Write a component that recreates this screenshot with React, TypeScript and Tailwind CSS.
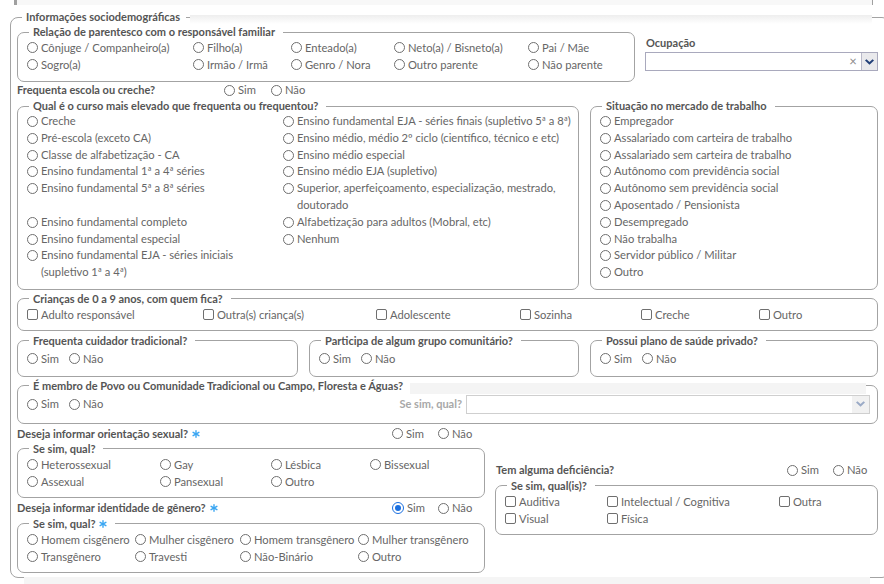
import React from "react";

const Radio = ({ checked = false }: { checked?: boolean }) =>
  checked ? (
    <span className="inline-flex w-[12px] h-[12px] shrink-0 rounded-full border border-[#1a6fe0] bg-white p-[2px]">
      <span className="block w-full h-full rounded-full bg-[#1a6fe0]" />
    </span>
  ) : (
    <span className="inline-block w-[11px] h-[11px] shrink-0 rounded-full border border-[#6f6f6f] bg-white" />
  );

const Check = () => (
  <span className="inline-block w-[11px] h-[11px] shrink-0 rounded-[2px] border border-[#6f6f6f] bg-white" />
);

type OptProps = { label: React.ReactNode; checked?: boolean; box?: boolean; className?: string };

const Opt = ({ label, checked, box, className = "" }: OptProps) => (
  <div className={`flex items-center gap-[3px] whitespace-nowrap ${className}`}>
    {box ? <Check /> : <Radio checked={checked} />}
    <span>{label}</span>
  </div>
);

const OptTop = ({ label }: { label: React.ReactNode }) => (
  <div className="flex items-start gap-[3px] whitespace-nowrap">
    <span className="mt-[3px] inline-block w-[11px] h-[11px] shrink-0 rounded-full border border-[#6f6f6f] bg-white" />
    <span>{label}</span>
  </div>
);

const Star = () => (
  <svg width="8" height="8" viewBox="0 0 8 8" className="shrink-0">
    <g stroke="#3aa6f2" strokeWidth="1.4" strokeLinecap="round">
      <line x1="4" y1="0.7" x2="4" y2="7.3" />
      <line x1="1.1" y1="2.3" x2="6.9" y2="5.7" />
      <line x1="1.1" y1="5.7" x2="6.9" y2="2.3" />
    </g>
  </svg>
);

type FSProps = { legend: React.ReactNode; className?: string; inner?: string; children: React.ReactNode };

const FS = ({ legend, className = "", inner = "", children }: FSProps) => (
  <fieldset className={`min-w-0 border border-[#a3a3a3] rounded-[7px] ${className}`}>
    <legend className="ml-[11px] pl-[4px] pr-[8px] font-bold text-[11px] text-[#555] leading-[14px]">
      <span className="inline-flex items-center gap-[4px]">{legend}</span>
    </legend>
    <div className={`pl-[9px] ${inner}`}>{children}</div>
  </fieldset>
);

const Chevron = ({ color }: { color: string }) => (
  <svg width="9" height="6" viewBox="0 0 10 6">
    <polygon points="0,1.4 1.6,0 5,3 8.4,0 10,1.4 5,6" fill={color} />
  </svg>
);

const B = "font-bold text-[11px] text-[#555]";

export default function App() {
  return (
    <div className="relative w-[884px] h-[584px] overflow-hidden bg-white text-[11.2px] text-[#666] [font-family:Lato,sans-serif]">
      <div className="h-[5px] ml-[14px] w-[859px] bg-[#f8f8f8] border-l-[3px] border-r border-[#a0a0a0]" />
      <fieldset className="mt-[5px] ml-[10px] w-[880px] border border-[#a3a3a3] rounded-[8px] pb-[4px]">
        <legend className="ml-[11px] pl-[4px] pr-[6px] font-bold text-[11px] text-[#555] leading-[14px]">
          Informações sociodemográficas
        </legend>
        <div className="pl-[6px] pr-[11px]">
          {/* Top row */}
          <div className="flex gap-[10px]">
            <FS legend="Relação de parentesco com o responsável familiar" className="mt-[1px] w-[618px] pb-[8px]">
              <div className="grid grid-cols-[166px_98px_103px_134px_1fr] leading-[17px]">
                <Opt label="Cônjuge / Companheiro(a)" />
                <Opt label="Filho(a)" />
                <Opt label="Enteado(a)" />
                <Opt label="Neto(a) / Bisneto(a)" />
                <Opt label="Pai / Mãe" />
                <Opt label="Sogro(a)" />
                <Opt label="Irmão / Irmã" />
                <Opt label="Genro / Nora" />
                <Opt label="Outro parente" />
                <Opt label="Não parente" />
              </div>
            </FS>
            <div className="flex-1">
              <div className={`mt-[11px] ${B} leading-[16px] pl-[1px]`}>Ocupação</div>
              <div className="mt-[1px] h-[19px] flex border border-[#a9a9bd] bg-white">
                <div className="flex-1" />
                <div className="w-[16px] flex items-center justify-center text-[#8a8a8a] text-[13px] leading-none">×</div>
                <div className="w-[16px] border-l border-[#b9b9c9] bg-[#e9e9ec] flex items-center justify-center">
                  <Chevron color="#213f78" />
                </div>
              </div>
            </div>
          </div>

          {/* Frequenta escola */}
          <div className="flex h-[17px] items-center">
            <div className={`w-[207px] ${B}`}>Frequenta escola ou creche?</div>
            <Opt label="Sim" className="w-[47px]" />
            <Opt label="Não" />
          </div>

          {/* Curso + Situação */}
          <div className="flex gap-[11px]">
            <FS legend="Qual é o curso mais elevado que frequenta ou frequentou?" className="w-[562px] pb-[8px]">
              <div className="grid grid-cols-[256px_1fr] leading-[16.8px]">
                <OptTop label="Creche" />
                <OptTop label="Ensino fundamental EJA - séries finais (supletivo 5ª a 8ª)" />
                <OptTop label="Pré-escola (exceto CA)" />
                <OptTop label="Ensino médio, médio 2º ciclo (científico, técnico e etc)" />
                <OptTop label="Classe de alfabetização - CA" />
                <OptTop label="Ensino médio especial" />
                <OptTop label="Ensino fundamental 1ª a 4ª séries" />
                <OptTop label="Ensino médio EJA (supletivo)" />
                <OptTop label="Ensino fundamental 5ª a 8ª séries" />
                <OptTop
                  label={
                    <>
                      Superior, aperfeiçoamento, especialização, mestrado,
                      <br />
                      doutorado
                    </>
                  }
                />
                <OptTop label="Ensino fundamental completo" />
                <OptTop label="Alfabetização para adultos (Mobral, etc)" />
                <OptTop label="Ensino fundamental especial" />
                <OptTop label="Nenhum" />
                <OptTop
                  label={
                    <>
                      Ensino fundamental EJA - séries iniciais
                      <br />
                      (supletivo 1ª a 4ª)
                    </>
                  }
                />
                <div />
              </div>
            </FS>
            <FS legend="Situação no mercado de trabalho" className="flex-1 pb-[8px]">
              <div className="flex flex-col leading-[16.8px]">
                <OptTop label="Empregador" />
                <OptTop label="Assalariado com carteira de trabalho" />
                <OptTop label="Assalariado sem carteira de trabalho" />
                <OptTop label="Autônomo com previdência social" />
                <OptTop label="Autônomo sem previdência social" />
                <OptTop label="Aposentado / Pensionista" />
                <OptTop label="Desempregado" />
                <OptTop label="Não trabalha" />
                <OptTop label="Servidor público / Militar" />
                <OptTop label="Outro" />
              </div>
            </FS>
          </div>

          {/* Crianças */}
          <FS legend="Crianças de 0 a 9 anos, com quem fica?" className="mt-[2px] pb-[6px]">
            <div className="flex h-[18px] items-center">
              <Opt box label="Adulto responsável" className="w-[176px]" />
              <Opt box label="Outra(s) criança(s)" className="w-[173px]" />
              <Opt box label="Adolescente" className="w-[144px]" />
              <Opt box label="Sozinha" className="w-[121px]" />
              <Opt box label="Creche" className="w-[118px]" />
              <Opt box label="Outro" />
            </div>
          </FS>

          {/* Three boxes */}
          <div className="mt-[3px] flex gap-[11px]">
            <FS legend="Frequenta cuidador tradicional?" className="w-[281px] pt-[2px] pb-[8px]">
              <div className="flex h-[18px] items-center">
                <Opt label="Sim" className="w-[42px]" />
                <Opt label="Não" />
              </div>
            </FS>
            <FS legend="Participa de algum grupo comunitário?" className="w-[270px] pt-[2px] pb-[8px]">
              <div className="flex h-[18px] items-center">
                <Opt label="Sim" className="w-[42px]" />
                <Opt label="Não" />
              </div>
            </FS>
            <FS legend="Possui plano de saúde privado?" className="flex-1 pt-[2px] pb-[8px]">
              <div className="flex h-[18px] items-center">
                <Opt label="Sim" className="w-[42px]" />
                <Opt label="Não" />
              </div>
            </FS>
          </div>

          {/* É membro */}
          <FS
            legend="É membro de Povo ou Comunidade Tradicional ou Campo, Floresta e Águas?"
            className="mt-[2px] pt-[2px] pb-[9px]"
            inner="pr-[7px]"
          >
            <div className="flex h-[19px] items-center">
              <Opt label="Sim" className="w-[42px]" />
              <Opt label="Não" />
              <div className="flex-1 flex items-center justify-end">
                <span className="font-bold text-[11px] text-[#a8a8a8] mr-[4px]">Se sim, qual?</span>
                <div className="w-[404px] h-[19px] flex border border-[#cfcfcf] bg-white">
                  <div className="flex-1" />
                  <div className="w-[17px] bg-[#f1f1f1] flex items-center justify-center">
                    <Chevron color="#9aaac6" />
                  </div>
                </div>
              </div>
            </div>
          </FS>

          {/* Bottom section */}
          <div className="flex items-center gap-[10px]">
            <div className="w-[468px]">
              <div className="mt-[2px] flex h-[16px] items-center">
                <div className={`w-[375px] ${B} flex items-center gap-[4px]`}>
                  Deseja informar orientação sexual? <Star />
                </div>
                <Opt label="Sim" className="w-[46px]" />
                <Opt label="Não" />
              </div>
              <FS legend="Se sim, qual?" className="pb-[7px]">
                <div className="grid grid-cols-[133px_111px_99px_1fr] leading-[17px]">
                  <Opt label="Heterossexual" />
                  <Opt label="Gay" />
                  <Opt label="Lésbica" />
                  <Opt label="Bissexual" />
                  <Opt label="Assexual" />
                  <Opt label="Pansexual" />
                  <Opt label="Outro" />
                </div>
              </FS>
              <div className="mt-[2px] flex h-[17px] items-center">
                <div className={`w-[375px] ${B} flex items-center gap-[4px]`}>
                  Deseja informar identidade de gênero? <Star />
                </div>
                <Opt label="Sim" checked className="w-[46px]" />
                <Opt label="Não" />
              </div>
              <FS
                legend={
                  <>
                    Se sim, qual? <Star />
                  </>
                }
                className="pb-[7px]"
              >
                <div className="grid grid-cols-[108px_105px_118px_1fr] leading-[17px]">
                  <Opt label="Homem cisgênero" />
                  <Opt label="Mulher cisgênero" />
                  <Opt label="Homem transgênero" />
                  <Opt label="Mulher transgênero" />
                  <Opt label="Transgênero" />
                  <Opt label="Travesti" />
                  <Opt label="Não-Binário" />
                  <Opt label="Outro" />
                </div>
              </FS>
            </div>
            <div className="flex-1">
              <div className="flex h-[17px] items-center">
                <div className={`w-[292px] ${B} pl-[1px]`}>Tem alguma deficiência?</div>
                <Opt label="Sim" className="w-[46px]" />
                <Opt label="Não" />
              </div>
              <FS legend="Se sim, qual(is)?" className="pb-[7px]">
                <div className="grid grid-cols-[102px_172px_1fr] leading-[17px]">
                  <Opt box label="Auditiva" />
                  <Opt box label="Intelectual / Cognitiva" />
                  <Opt box label="Outra" />
                  <Opt box label="Visual" />
                  <Opt box label="Física" />
                </div>
              </FS>
            </div>
          </div>
        </div>
      </fieldset>

      {/* overlay bands */}
      <div className="absolute left-[190px] top-[15px] w-[682px] h-[9px] bg-linear-to-b from-[#eeeeee] to-white" />
      <div className="absolute left-[410px] top-[383px] w-[456px] h-[11px] bg-[#f4f4f4]" />
      <div className="absolute left-[24px] top-[577px] w-[846px] h-[7px] bg-[#f5f5f5]" />
    </div>
  );
}
